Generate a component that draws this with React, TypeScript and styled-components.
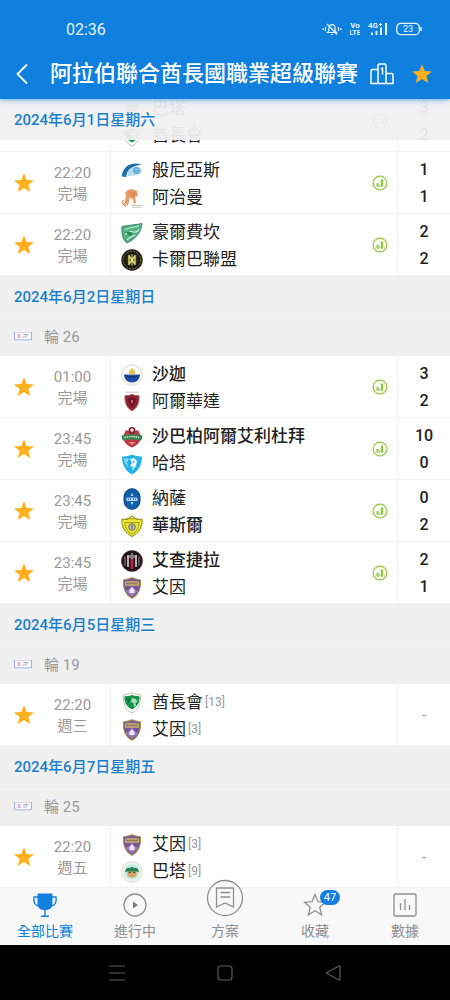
import React from "react";
import styled, { createGlobalStyle } from "styled-components";

const BLUE = "#0f80dd";
const ORANGE = "#ffb01c";
const GREY = "#999";

const GlobalStyle = createGlobalStyle`
  *, *::before, *::after { box-sizing: border-box; }
  body {
    margin: 0;
    background: #fff;
    font-family: Roboto, "Noto Sans CJK TC", sans-serif;
    color: #222;
  }
  h1, h2, h3, p, ul { margin: 0; padding: 0; font-weight: 400; }
  ul { list-style: none; }
  svg { display: block; flex: none; }
`;

const Screen = styled.div`
  display: flex;
  flex-direction: column;
  height: 100vh;
`;

const Header = styled.header`
  position: relative;
  z-index: 3;
  flex: none;
  background: ${BLUE};
  color: #fff;
  box-shadow: 0 1px 5px rgba(15, 128, 221, 0.6);
`;

const StatusBar = styled.div`
  display: flex;
  align-items: center;
  justify-content: space-between;
  height: 50px;
  padding: 8px 28px 0 66px;
  font-size: 16px;
  color: #e2f4ff;
`;

const StatusIcons = styled.div`
  display: flex;
  align-items: center;
  gap: 8px;
`;

const TitleBar = styled.div`
  display: flex;
  align-items: center;
  height: 49px;
  padding: 0 8px 2px 6px;
`;

const IconButton = styled.button<{ $width: number }>`
  display: flex;
  flex: none;
  align-items: center;
  justify-content: center;
  width: ${(p) => p.$width}px;
  height: 40px;
  padding: 0;
  border: 0;
  background: none;
  color: inherit;
  cursor: pointer;
`;

const Title = styled.h1`
  flex: 1;
  padding-left: 12px;
  font-size: 22px;
  line-height: 32px;
  font-weight: 500;
  white-space: nowrap;
`;

const Main = styled.main`
  position: relative;
  flex: 1;
  min-height: 0;
`;

const Scroller = styled.div`
  height: 100%;
  overflow-y: auto;
  scrollbar-width: none;
`;

const ScrolledContent = styled.div`
  margin-top: -9px;
`;

const DateHeading = styled.h2`
  height: 41px;
  padding: 0 14px;
  border-bottom: 1px solid #e9e9e9;
  background: #f0f0f0;
  color: #1a80cc;
  font-size: 15px;
  line-height: 43px;
  font-weight: 500;
`;

const PinnedDate = styled(DateHeading)`
  position: absolute;
  z-index: 2;
  top: 0;
  left: 0;
  right: 0;
  border-bottom: 0;
  background: rgba(240, 240, 240, 0.95);
`;

const RoundHeading = styled.h3`
  display: flex;
  align-items: center;
  gap: 12px;
  height: 39px;
  padding: 0 14px 2px;
  background: #f0f0f0;
  color: ${GREY};
  font-size: 15px;
`;

const MatchRow = styled.li`
  display: grid;
  grid-template-columns: 48px 49px 1fr 53px;
  height: 62px;
  border-bottom: 1px solid #f1f1f1;
  background: #fff;
`;

const StarCell = styled.div`
  display: flex;
  align-items: center;
`;

const TimeCell = styled.div`
  padding-top: 11px;
  color: ${GREY};
  font-size: 15px;
  line-height: 21px;
  text-align: center;
`;

const InfoCell = styled.div`
  display: flex;
  margin-left: 13px;
  border-left: 1px solid #f1f1f1;
`;

const Teams = styled.div`
  flex: 1;
  padding: 5px 0 0 10px;
`;

const Team = styled.p<{ $winner?: boolean }>`
  display: flex;
  align-items: center;
  height: 27px;
  font-size: 17px;
  line-height: 27px;
  font-weight: ${(p) => (p.$winner ? 500 : 400)};
  white-space: nowrap;
`;

const Crest = styled.svg`
  width: 22px;
  height: 22px;
  margin-right: 9px;
`;

const Rank = styled.span`
  margin-left: 2px;
  color: ${GREY};
  font-size: 12px;
`;

const Scores = styled.div`
  display: flex;
  flex-direction: column;
  padding-top: 4px;
  border-left: 1px solid #f1f1f1;
  font-size: 16px;
  line-height: 27px;
  font-weight: 500;
  text-align: center;
`;

const NoScore = styled.div`
  align-self: stretch;
  border-left: 1px solid #f1f1f1;
  color: ${GREY};
  font-size: 15px;
  line-height: 62px;
  text-align: center;
`;

const TabBar = styled.nav`
  position: relative;
  z-index: 3;
  flex: none;
  display: grid;
  grid-template-columns: repeat(5, 1fr);
  background: #f8f8f8;
`;

const Tab = styled.a<{ $active?: boolean }>`
  display: flex;
  flex-direction: column;
  align-items: center;
  gap: 4px;
  padding: 5px 0 4px;
  color: ${(p) => (p.$active ? BLUE : "#8f8f8f")};
  font-size: 14px;
  line-height: 20px;
  text-decoration: none;
`;

const TabIcon = styled.span`
  position: relative;
  display: flex;
  justify-content: center;
  align-items: flex-end;
  width: 38px;
  height: 24px;
`;

const Badge = styled.span`
  position: absolute;
  top: -3px;
  left: 24px;
  min-width: 20px;
  border-radius: 8px;
  background: ${BLUE};
  color: #fff;
  font-size: 11px;
  line-height: 15px;
  text-align: center;
`;

const SystemBar = styled.div`
  display: flex;
  flex: none;
  justify-content: center;
  gap: 68px;
  height: 55px;
  align-items: center;
  background: #000;
  color: #5c5c5c;
`;

const STAR = "M12 2.2l2.7 6.7 7.2.5-5.5 4.6 1.8 7L12 17.1 5.800 21l1.800-7L2.100 9.400l7.200-.5z";

const FilledStar = () => (
  <svg width="24" height="24" viewBox="0 0 24 24" fill={ORANGE}>
    <path d={STAR} />
  </svg>
);

const ChartBadge = () => (
  <svg width="16" height="16" viewBox="0 0 16 16">
    <circle cx="8" cy="8" r="6.900" fill="#fcfff4" stroke="#93c43c" strokeWidth="1.200" />
    <path d="M4.500 8h2v3.800h-2zM7.200 9.500h1v2.300h-1zM8.900 4.400h2.300v7.400H8.900z" fill="#8cc63a" />
  </svg>
);

const RoundTag = () => (
  <svg width="18" height="10" viewBox="0 0 18 10" fill="none">
    <path d="M.5 1v7.500c5 .7 12 .7 17 0V1" fill="#f6f8fd" stroke="#9db4e4" />
    <path d="M1 1.500h16" stroke="#e6d6e6" />
    <path d="M3 5.500l2-2 2 2M3.500 6.500h3M5 3v3" stroke="#e3a0bd" />
    <path d="M9.500 3.500h5M12 3.500v3M9 6h2" stroke="#a6a9de" />
  </svg>
);

const SHIELD = "M2.500 3Q7 2.500 11 .8 15 2.500 19.500 3c.6 8-1.500 14.500-8.500 18.200C4 17.500 1.900 11 2.500 3z";

const CRESTS: Record<string, React.ReactNode> = {
  baniyas: (
    <>
      <path d="M21 4.500C10 1 1.500 6.500.8 16.500L5.500 17c-.5-6 4.500-11 15.500-12.500z" fill="#1d6fa8" />
      <path d="M6.500 16c-1-5 3-9 8.500-9 4 0 6 1.500 6 4 0 4-9 5-14.500 5z" fill="#b4dbf0" />
      <circle cx="15.500" cy="10.500" r="3.400" fill="#5aa5da" />
      <path d="M13.500 9.500h4M14 12h3" stroke="#c8e6f7" strokeWidth=".7" />
    </>
  ),
  ajman: (
    <>
      <path d="M7 3l4-1 5 2 1 5-3 1 1 5-2 3-1-6-4-1-2 6-4 1 2-4 1-5-1-3z" fill="#e99a63" />
      <path d="M2 13c-1 3 0 6 2.500 6S7 15 8 12M9 5l4 2M15 4l-4 6" fill="none" stroke="#cf7c47" />
      <path d="M11 18.500h10.500M11 20.200h10.500" stroke="#b5b5b5" strokeWidth="1" strokeDasharray="2 .5" />
    </>
  ),
  khorfakkan: (
    <>
      <path d="M1 4.500C8 3 14 3 21 1.500c-.5 8-5.500 15-15 19.500C1.500 18 .5 11 1 4.500z" fill="#4fb382" stroke="#47896a" />
      <path d="M3.500 8C8 5.500 14 5 18 4M4 13c3-4 6-4 9-3s4-1 5-3M6 18c2-3 5-3 8-5" fill="none" stroke="#c7ebd7" strokeWidth="1.200" />
      <path d="M5 10.500l3-1 4 2-3 2.500z" fill="#2b7f57" />
    </>
  ),
  kalba: (
    <>
      <circle cx="11" cy="11" r="10.700" fill="#17170f" />
      <circle cx="11" cy="11" r="8.800" fill="none" stroke="#8f8a35" strokeWidth="1" strokeDasharray="2 1" />
      <circle cx="11" cy="11" r="6.500" fill="#2e2d18" />
      <path d="M8 6v10M14 6v10M8 7l6 8M14 7l-6 8" stroke="#e6dc6b" strokeWidth="1.400" />
      <path d="M11 5.500v11" stroke="#fff" strokeWidth=".8" />
    </>
  ),
  sharjah: (
    <>
      <circle cx="11" cy="11" r="10.400" fill="#fff" stroke="#dcdbd3" />
      <circle cx="11" cy="11" r="8.800" fill="none" stroke="#ece8d2" strokeDasharray="1.500 1" />
      <path d="M3 10.500h16c0 5-3.500 8-8 8s-8-3-8-8z" fill="#1c4fa6" />
      <path d="M8 10.500V7l3-3 3 3v3.500z" fill="#e2be4e" />
      <path d="M5 12h12v1.500H5z" fill="#103577" />
    </>
  ),
  wahda: (
    <>
      <path d="M4 1.200h14" stroke="#b7a8a8" strokeWidth=".7" />
      <path d="M4 4.500Q8 5 11 3.300 14 5 18 4.500c.5 6-1 12-7 15.500C5 16.500 3.500 10.500 4 4.500z" fill="#8d2036" stroke="#a36e58" />
      <path d="M7 7h8l-1 5-3 4-3-4z" fill="#6e1429" />
      <path d="M10 9h2v2l-1 2-1-2z" fill="#c9645a" />
    </>
  ),
  shabab: (
    <>
      <path d="M5 4l3 1 3-4 3 4 3-1 3 6c0 6-4 9.500-9 11.500C6 19.500 2 16 2 10z" fill="#bd3743" />
      <circle cx="11" cy="4.500" r="3.400" fill="#7d2230" />
      <path d="M9 4l2-2 2 2-2 2.500z" fill="#f3e3df" />
      <path d="M.5 9.500q10.500-3 21 0l-1 5q-9.500-2-19 0z" fill="#3f8755" />
      <path d="M3.500 11.500q7.500-1.700 15 0" stroke="#d5ecd8" strokeWidth="1.300" fill="none" strokeDasharray="1.500 .7" />
      <path d="M7 16h8l-4 3z" fill="#e0877d" />
    </>
  ),
  hatta: (
    <>
      <path d="M1 3.500Q6 4 11 1.500 16 4 21 3.500c0 8-3 14-10 18C4 17.500 1 11.500 1 3.500z" fill="#25b2ea" />
      <path d="M3 5l5 1-2 3 1 5-3-4z" fill="#8adcf7" />
      <path d="M9 6l4-1 3 3-1 5-4 5 1-4-3-1 2-3z" fill="#e9f9ff" />
      <circle cx="12.500" cy="9" r=".9" fill="#25b2ea" />
    </>
  ),
  nasr: (
    <>
      <rect x="3" y=".7" width="16" height="20.600" rx="8" fill="#105ea9" stroke="#0a4888" />
      <path d="M11 5l1.500 3h-3zM11 17l-1.500-3h3z" fill="#b5d8f5" />
      <path d="M5.500 9.500h11v3.500h-11z" fill="#b5d8f5" />
      <path d="M7.500 10.500v1.500M9.500 10v2M12.500 10v2M14.500 10.500v1.500" stroke="#0d549b" strokeWidth=".8" />
    </>
  ),
  wasl: (
    <>
      <path d="M1 4l5 .5L11 .8l5 3.700 5-.5c.8 8-3 14-10 17.500C4 18 .2 12 1 4z" fill="#eae62c" stroke="#88871d" />
      <path d="M5 3.800h12" stroke="#8b8a26" strokeDasharray="2 .8" />
      <path d="M4 7.500h14c0 6-2.500 9-7 11.500-4.500-2.500-7-5.500-7-11.500z" fill="none" stroke="#8b8a26" strokeWidth=".8" />
      <circle cx="11" cy="12" r="3.300" fill="#cfccb8" stroke="#6a6a55" />
      <path d="M9.500 11h3M10 13h2" stroke="#4a4a68" />
    </>
  ),
  jazira: (
    <>
      <circle cx="11" cy="11" r="10.600" fill="#1b1317" stroke="#6b3b44" strokeWidth=".6" />
      <path d="M7 5v12M15 5v12" stroke="#e9e5e5" strokeWidth="1.500" />
      <path d="M11 8v11" stroke="#b5233c" strokeWidth="3" />
      <path d="M11 3v6M9 5v3M13 5v3" stroke="#e9e5e5" strokeWidth="1" />
      <path d="M4 6.500v9M18 6.500v9" stroke="#9d7077" strokeWidth="1.200" />
    </>
  ),
  ain: (
    <>
      <path d={SHIELD} fill="#76539c" stroke="#a48b50" strokeWidth="1.200" />
      <path d="M3.800 4.500q7.200-1.500 14.400 0V9H3.800z" fill="#b59f70" />
      <path d="M5.500 6.500h11" stroke="#7d6858" strokeWidth="1" strokeDasharray="1.500 .7" />
      <path d="M4.500 14l4-2 2.500-3.500 2 3.500 4 2-6 5.500z" fill="#9c7fbe" />
      <path d="M8.500 16v-3L11 10l2.500 3v3z" fill="#efe6f8" />
    </>
  ),
  emirates: (
    <>
      <path d={SHIELD} fill="#fff" stroke="#a9b58f" strokeWidth=".8" />
      <path d="M3.500 4.200q7-.2 7.500-1.800 1 1.600 7.500 1.800c.3 6-1.500 10-7.500 13.300C5 14.200 3.200 10.200 3.500 4.200z" fill="#15924a" />
      <path d="M11 6l4 1 1.500 3-2 .5.500 3.500-2 1-.5-4-3-1z" fill="#a9dcbc" />
      <path d="M5 6l4 1-1 4z" fill="#0b6b34" />
    </>
  ),
  bataeh: (
    <>
      <circle cx="11" cy="11" r="10.400" fill="#e5f5ee" stroke="#eedfd0" />
      <circle cx="11" cy="11" r="7.500" fill="#c3ebdd" />
      <path d="M4 11q1-5 5-4 2-2 4 0 4-1 5 4-2-1-3 0H7q-1-1-3 0z" fill="#298057" />
      <path d="M6.500 10.500h9V15q-4.500 3-9 0z" fill="#d9a36a" />
      <path d="M7.500 11.500h2.500M12 11.500h2.500" stroke="#4c5a2c" />
    </>
  ),
};

type TeamInfo = { crest: string; name: string; score?: number; winner?: boolean; rank?: number };
type MatchInfo = { time?: string; status?: string; teams: [TeamInfo, TeamInfo] };

const Match = ({ match }: { match: MatchInfo }) => {
  const played = match.teams[0].score !== undefined;
  return (
    <MatchRow>
      <StarCell>
        <IconButton $width={48} type="button" aria-label="收藏">
          <FilledStar />
        </IconButton>
      </StarCell>
      <TimeCell>
        <p>{match.time}</p>
        <p>{match.status}</p>
      </TimeCell>
      <InfoCell>
        <Teams>
          {match.teams.map((team) => (
            <Team key={team.crest} $winner={team.winner}>
              <Crest viewBox="0 0 22 22">{CRESTS[team.crest]}</Crest>
              {team.name}
              {team.rank !== undefined && <Rank>[{team.rank}]</Rank>}
            </Team>
          ))}
        </Teams>
        {played && (
          <StarCell>
            <IconButton $width={34} type="button" aria-label="數據">
              <ChartBadge />
            </IconButton>
          </StarCell>
        )}
      </InfoCell>
      {played ? (
        <Scores>
          {match.teams.map((team) => (
            <span key={team.crest}>{team.score}</span>
          ))}
        </Scores>
      ) : (
        <NoScore>-</NoScore>
      )}
    </MatchRow>
  );
};

const firstDay: MatchInfo[] = [
  { teams: [{ crest: "bataeh", name: "巴塔", score: 3, winner: true }, { crest: "emirates", name: "酋長會", score: 2 }] },
  { time: "22:20", status: "完場", teams: [{ crest: "baniyas", name: "般尼亞斯", score: 1 }, { crest: "ajman", name: "阿治曼", score: 1 }] },
  { time: "22:20", status: "完場", teams: [{ crest: "khorfakkan", name: "豪爾費坎", score: 2 }, { crest: "kalba", name: "卡爾巴聯盟", score: 2 }] },
];

const days: { date: string; round: number; matches: MatchInfo[] }[] = [
  {
    date: "2024年6月2日星期日",
    round: 26,
    matches: [
      { time: "01:00", status: "完場", teams: [{ crest: "sharjah", name: "沙迦", score: 3, winner: true }, { crest: "wahda", name: "阿爾華達", score: 2 }] },
      { time: "23:45", status: "完場", teams: [{ crest: "shabab", name: "沙巴柏阿爾艾利杜拜", score: 10, winner: true }, { crest: "hatta", name: "哈塔", score: 0 }] },
      { time: "23:45", status: "完場", teams: [{ crest: "nasr", name: "納薩", score: 0 }, { crest: "wasl", name: "華斯爾", score: 2, winner: true }] },
      { time: "23:45", status: "完場", teams: [{ crest: "jazira", name: "艾查捷拉", score: 2, winner: true }, { crest: "ain", name: "艾因", score: 1 }] },
    ],
  },
  {
    date: "2024年6月5日星期三",
    round: 19,
    matches: [{ time: "22:20", status: "週三", teams: [{ crest: "emirates", name: "酋長會", rank: 13 }, { crest: "ain", name: "艾因", rank: 3 }] }],
  },
  {
    date: "2024年6月7日星期五",
    round: 25,
    matches: [{ time: "22:20", status: "週五", teams: [{ crest: "ain", name: "艾因", rank: 3 }, { crest: "bataeh", name: "巴塔", rank: 9 }] }],
  },
];

const StatusGlyphs = () => (
  <StatusIcons>
    <svg width="20" height="14" viewBox="0 0 20 14" fill="none" stroke="currentColor" strokeWidth="1.200">
      <path d="M5.500 10.500h9L13 8.500V6c0-2-1.200-3.300-3-3.300S7 4 7 6v2.500zM9 12.500h2M5 2l10 10.500M3.500 5v4M16.500 5v4M1.200 6v2M18.800 6v2" />
    </svg>
    <svg width="10" height="14" viewBox="0 0 10 14" fill="currentColor" fontFamily="Roboto" fontWeight="700">
      <text x="5" y="6" fontSize="8" textAnchor="middle">Vo</text>
      <text x="5" y="13" fontSize="7" textAnchor="middle" >LTE</text>
    </svg>
    <svg width="20" height="14" viewBox="0 0 20 14" fill="currentColor" fontFamily="Roboto" fontWeight="700">
      <text x="0" y="6" fontSize="8">4G</text>
      <path d="M11 2.500h3M12.500 1v3" stroke="currentColor" fill="none" />
      <path d="M3 10.500h2V13H3zM7.500 9h2v4h-2zM12 5.500h2V13h-2zM17 1h2v12h-2z" />
    </svg>
    <svg width="26" height="14" viewBox="0 0 26 14" fill="none" stroke="currentColor" strokeWidth="1.300">
      <rect x=".8" y="1.300" width="22.500" height="11.400" rx="4" />
      <path d="M25 5v4" strokeWidth="1.500" />
      <text x="12" y="10.300" fontSize="9" fontFamily="Roboto" fill="currentColor" stroke="none" textAnchor="middle">23</text>
    </svg>
  </StatusIcons>
);

const App = () => (
  <Screen>
    <GlobalStyle />
    <Header>
      <StatusBar>
        <span>02:36</span>
        <StatusGlyphs />
      </StatusBar>
      <TitleBar>
        <IconButton $width={32} type="button" aria-label="返回">
          <svg width="14" height="22" viewBox="0 0 14 22" fill="none" stroke="currentColor" strokeWidth="1.800">
            <path d="M12 1.500L2.500 11l9.500 9.500" />
          </svg>
        </IconButton>
        <Title>阿拉伯聯合酋長國職業超級聯賽</Title>
        <IconButton $width={40} type="button" aria-label="排名">
          <svg width="24" height="22" viewBox="0 0 24 22" fill="none" stroke="currentColor" strokeWidth="1.500" strokeLinejoin="round">
            <path d="M8 20.500V2.500q0-1.500 1.500-1.500h5Q16 1 16 2.500v18zM8 6.500H2.500Q1 6.500 1 8v12.500h22V12q0-1.500-1.500-1.500H16M11 6l1.500-1v6.500" />
          </svg>
        </IconButton>
        <IconButton $width={40} type="button" aria-label="收藏聯賽">
          <FilledStar />
        </IconButton>
      </TitleBar>
    </Header>

    <Main>
      <PinnedDate>2024年6月1日星期六</PinnedDate>
      <Scroller>
        <ScrolledContent>
          <ul>
            {firstDay.map((match, i) => (
              <Match key={i} match={match} />
            ))}
          </ul>
          {days.map((day) => (
            <section key={day.date}>
              <DateHeading>{day.date}</DateHeading>
              <RoundHeading>
                <RoundTag />
                輪 {day.round}
              </RoundHeading>
              <ul>
                {day.matches.map((match, i) => (
                  <Match key={i} match={match} />
                ))}
              </ul>
            </section>
          ))}
        </ScrolledContent>
      </Scroller>
    </Main>

    <TabBar>
      <Tab $active href="#all" aria-current="page">
        <TabIcon>
          <svg width="24" height="24" viewBox="0 0 24 24" fill="none" stroke="currentColor" strokeWidth="1.400">
            <path d="M4.500.5h15V10q0 6-5.500 7h-4q-5.500-1-5.500-7z" fill="currentColor" stroke="none" />
            <path d="M5 4H1q-1 8.500 5 9M19 4h4q1 8.500-5 9M12 17v6M8 23.200h8" />
          </svg>
        </TabIcon>
        全部比賽
      </Tab>
      <Tab href="#live">
        <TabIcon>
          <svg width="24" height="24" viewBox="0 0 24 24" fill="none" stroke="currentColor" strokeWidth="1.300">
            <circle cx="12" cy="12" r="11" />
            <path d="M10 8.500l5 3.500-5 3.500z" fill="#7d7d7d" stroke="none" />
          </svg>
        </TabIcon>
        進行中
      </Tab>
      <Tab href="#plans">
        <TabIcon>
          <svg width="38" height="38" viewBox="0 0 38 38" fill="none" stroke="currentColor" strokeWidth="1.300">
            <circle cx="19" cy="19" r="17.500" fill="#f8f8f8" />
            <path d="M10.500 9h17v19l-8.500-4-8.500 4zM14.500 13.500h9.500M14.500 18h9.500" />
          </svg>
        </TabIcon>
        方案
      </Tab>
      <Tab href="#favourites">
        <TabIcon>
          <svg width="24" height="24" viewBox="0 0 24 24" fill="none" stroke="currentColor" strokeWidth="1.300">
            <path d="M12 1.500l2.900 7.200 7.700.5-5.900 5 1.900 7.700L12 17.800l-6.600 4.100 1.900-7.700-5.900-5 7.700-.5z" />
          </svg>
          <Badge>47</Badge>
        </TabIcon>
        收藏
      </Tab>
      <Tab href="#stats">
        <TabIcon>
          <svg width="24" height="24" viewBox="0 0 24 24" fill="none" stroke="currentColor" strokeWidth="1.300">
            <rect x="1" y="1" width="22" height="22" rx="1.500" />
            <path d="M7.500 10v7M12 6v11M16.500 12v5" />
          </svg>
        </TabIcon>
        數據
      </Tab>
    </TabBar>

    <SystemBar>
      {["M12 13h16M12 20h16M12 27h16", "M16 13h8q3 0 3 3v8q0 3-3 3h-8q-3 0-3-3v-8q0-3 3-3z", "M26 13q1-.5 1 .5v13q0 1-1 .5l-12-6.500q-1-.5 0-1z"].map((d) => (
        <IconButton key={d} $width={40} type="button" aria-label="系統導覽">
          <svg width="40" height="40" viewBox="0 0 40 40" fill="none" stroke="currentColor" strokeWidth="1.200">
            <path d={d} />
          </svg>
        </IconButton>
      ))}
    </SystemBar>
  </Screen>
);

export default App;
